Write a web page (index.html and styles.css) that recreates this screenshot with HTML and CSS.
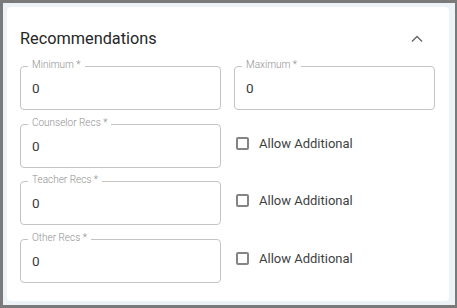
FILE: index.html
```html
<!DOCTYPE html>
<html>
<head>
<meta charset="utf-8">
<link rel="stylesheet" href="styles.css">
</head>
<body>
<div class="card">
  <div class="header">
    <h2 class="title">Recommendations</h2>
    <svg class="chev" width="24" height="24" viewBox="0 0 24 24"><path d="M7 14.5 L12 9.5 L17 14.5" fill="none" stroke="#666" stroke-width="1.4"/></svg>
  </div>
  <div class="grid">
    <div class="field"><span class="lbl">Minimum *</span><span class="val">0</span></div>
    <div class="field"><span class="lbl">Maximum *</span><span class="val">0</span></div>
    <div class="field"><span class="lbl">Counselor Recs *</span><span class="val">0</span></div>
    <label class="check"><span class="box"></span><span class="ctext">Allow Additional</span></label>
    <div class="field"><span class="lbl">Teacher Recs *</span><span class="val">0</span></div>
    <label class="check"><span class="box"></span><span class="ctext">Allow Additional</span></label>
    <div class="field"><span class="lbl">Other Recs *</span><span class="val">0</span></div>
    <label class="check"><span class="box"></span><span class="ctext">Allow Additional</span></label>
  </div>
</div>
</body>
</html>
```
FILE: styles.css
```css
html, body { margin: 0; }
body {
  box-sizing: border-box;
  width: 457px;
  height: 308px;
  border: 3px solid #7a7a7a;
  border-right-width: 2px;
  background: #ecf2f6;
  padding: 4px 6px 4px 4px;
  font-family: Roboto, "Liberation Sans", sans-serif;
  color: #333;
}
.card {
  background: #fff;
  border-radius: 4px;
  height: 100%;
  box-sizing: border-box;
  padding: 22px 14px 19px 13px;
}
.header {
  display: flex;
  align-items: center;
  justify-content: space-between;
  height: 20px;
}
.title {
  margin: 0;
  font-size: 16.3px;
  line-height: 20px;
  font-weight: 400;
  color: #262626;
}
.chev { margin-right: 6px; }
.grid {
  margin-top: 17px;
  display: grid;
  grid-template-columns: 1fr 1fr;
  column-gap: 13px;
  row-gap: 13.5px;
}
.field {
  position: relative;
  box-sizing: border-box;
  height: 44px;
  border: 1px solid #c4c4c4;
  border-radius: 4px;
  display: flex;
  align-items: center;
  padding-left: 11px;
}
.lbl {
  position: absolute;
  top: -8px;
  left: 7px;
  padding: 0 4px;
  background: #fff;
  font-size: 10px;
  line-height: 12px;
  font-weight: 300;
  color: #8f8f8f;
}
.val { font-size: 13.5px; color: #3a3a3a; }
.check {
  display: flex;
  align-items: center;
  padding-left: 2px;
  padding-bottom: 5px;
}
.box {
  box-sizing: border-box;
  width: 13px;
  height: 13px;
  border: 2px solid #858585;
  border-radius: 2px;
}
.ctext {
  margin-left: 10px;
  font-size: 13px;
  color: #3f3f3f;
}
```
